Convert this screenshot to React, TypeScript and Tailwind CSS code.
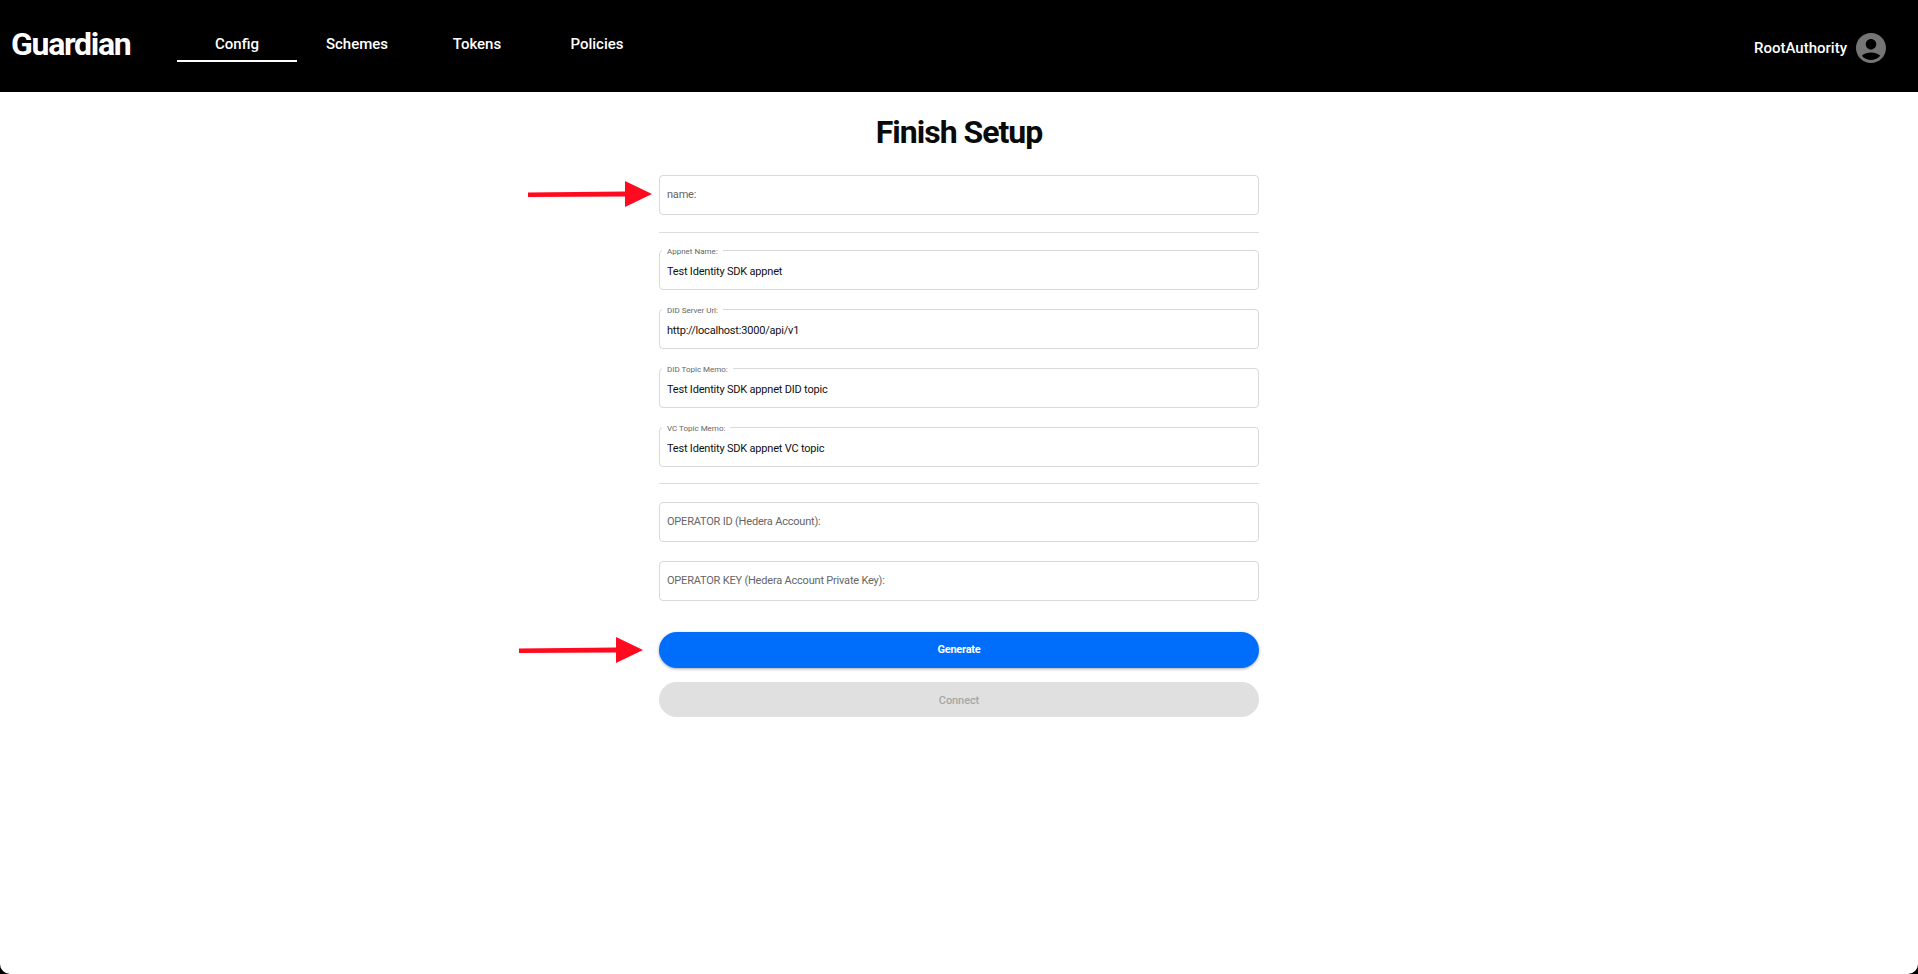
const tabs = ['Config', 'Schemes', 'Tokens', 'Policies'];

function Field({ label, value, placeholder }: { label?: string; value?: string; placeholder?: string }) {
    return (
        <div className="relative h-10 rounded-[4px] border border-[#d9d9d9] px-[7px] flex items-center">
            {label && (
                <span className="absolute left-[2px] top-[-5px] bg-white px-[5px] text-[8px] leading-[11px] text-[#666666]">
                    {label}
                </span>
            )}
            {value && <span className="mt-[5px] text-[11px] tracking-[-0.2px] text-[#111111]">{value}</span>}
            {placeholder && <span className="text-[11px] tracking-[-0.2px] text-[#666666]">{placeholder}</span>}
        </div>
    );
}

function Arrow({ className }: { className: string }) {
    return (
        <svg className={className} width="124" height="28" viewBox="0 0 124 28">
            <path d="M0 12.5 L97 11.5 L97 1 L124 14 L97 27 L97 16.5 L0 17 Z" fill="#ff0a1f" />
        </svg>
    );
}

export default function App() {
    return (
        <div className="h-[974px] bg-black [font-family:Roboto,sans-serif] overflow-hidden">
            <header className="h-[92px] flex text-white">
                <div className="w-[177px] pl-[11px] pt-[23px] text-[32px] leading-[42px] font-bold tracking-[-1.3px]">Guardian</div>
                <nav className="flex">
                    {tabs.map((tab, idx) => (
                        <div
                            key={tab}
                            className={`w-[120px] h-[62px] pt-[34px] text-center text-[15px] leading-[20px] font-medium ${idx === 0 ? 'border-b-2 border-white' : ''}`}
                        >
                            {tab}
                        </div>
                    ))}
                </nav>
                <div className="ml-auto flex items-center h-[96px] pr-[29px] gap-[6px]">
                    <span className="text-[15px] font-medium">RootAuthority</span>
                    <svg width="36" height="36" viewBox="0 0 24 24" fill="#757575">
                        <path d="M12 2C6.48 2 2 6.48 2 12s4.48 10 10 10 10-4.48 10-10S17.52 2 12 2zm0 4c1.93 0 3.5 1.57 3.5 3.5S13.93 13 12 13s-3.5-1.57-3.5-3.5S10.07 6 12 6zm0 14c-2.03 0-4.43-.82-6.14-2.88C7.55 15.8 9.68 15 12 15s4.45.8 6.14 2.12C16.43 19.18 14.03 20 12 20z" />
                    </svg>
                </div>
            </header>

            <main className="relative h-[882px] bg-white rounded-b-[10px] pt-[19px] flex flex-col items-center">
                <h1 className="text-[32px] leading-[42px] font-bold tracking-[-1px] text-[#0a0a0a]">Finish Setup</h1>
                <div className="w-[600px] mt-[22px] flex flex-col">
                    <Field placeholder="name:" />
                    <div className="h-px bg-[#dcdcdc] mt-[17px] mb-[17px]" />
                    <div className="flex flex-col gap-[19px]">
                        <Field label="Appnet Name:" value="Test Identity SDK appnet" />
                        <Field label="DID Server Url:" value="http://localhost:3000/api/v1" />
                        <Field label="DID Topic Memo:" value="Test Identity SDK appnet DID topic" />
                        <Field label="VC Topic Memo:" value="Test Identity SDK appnet VC topic" />
                    </div>
                    <div className="h-px bg-[#dcdcdc] mt-[16px] mb-[18px]" />
                    <div className="flex flex-col gap-[19px]">
                        <Field placeholder="OPERATOR ID (Hedera Account):" />
                        <Field placeholder="OPERATOR KEY (Hedera Account Private Key):" />
                    </div>
                    <button className="h-9 mt-[31px] rounded-[18px] bg-[#006dfb] text-white text-[11px] font-bold tracking-[-0.25px] shadow-[0_1px_3px_rgba(0,0,0,0.35)]">
                        Generate
                    </button>
                    <button className="h-[35px] mt-[14px] pt-[3px] rounded-[18px] bg-[#e0e0e0] text-[#a6a6a6] text-[11px] font-medium tracking-[-0.1px]">
                        Connect
                    </button>
                </div>
                <Arrow className="absolute left-[528px] top-[88px]" />
                <Arrow className="absolute left-[519px] top-[544px]" />
            </main>
        </div>
    );
}
